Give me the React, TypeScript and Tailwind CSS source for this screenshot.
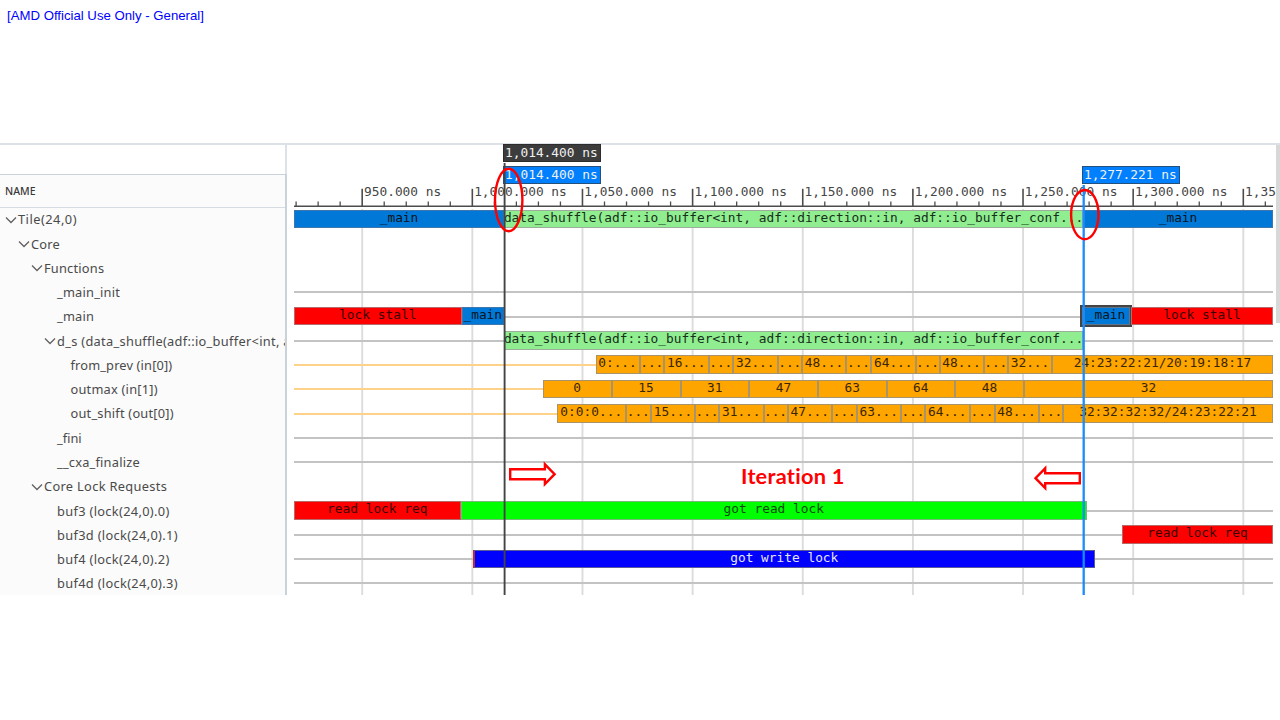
const MONO = 'font-["DejaVu_Sans_Mono",monospace] text-[12.83px] whitespace-pre';

const LEFT = 294;
const PITCH = 110.14;

type Segment = { from: number; to: number; label: string; tone: string };
type Row = {
  name: string;
  indent: number;
  tracking?: string;
  open?: boolean;
  line?: string;
  segments?: Segment[];
};

const BLUE = 'bg-[#0078d7] border-[#3d77ad] text-[#0a1420]';
const GREEN = 'bg-[#90ee90] border-[#9aae9a] text-[#16301a]';
const RED = 'bg-[#ff0000] border-[#b86a6a] text-[#3a0000]';
const ORANGE = 'bg-[#ffa500] border-[#a8936a] text-[#3a2600]';
const LIME = 'bg-[#00ff00] border-[#78b878] text-[#0a4a0a]';
const NAVY = 'bg-[#0000ff] border-[#5a5a9a] border-l-2 border-l-[#b03040] text-[#e6e6ff]';
const PICKED = 'bg-[#0078d7] border-[#5f7488] text-[#0a1420] outline-2 outline-[#444]';

const GREY_LINE = 'bg-[#c3c3c3]';
const AMBER_LINE = 'bg-[#ffd28a]';

const WIDE = 'tracking-[0.33px]';

const SHUFFLE = 'data_shuffle(adf::io_buffer<int, adf::direction::in, adf::io_buffer_conf...';

function chain(edges: number[], labels: string[]): Segment[] {
  return labels.map((label, i) => ({ from: edges[i], to: edges[i + 1], label, tone: ORANGE }));
}

const rows: Row[] = [
  {
    name: 'Tile(24,0)',
    indent: 5,
    tracking: 'tracking-[0.5px]',
    open: true,
    segments: [
      { from: 294, to: 504, label: '_main', tone: BLUE },
      { from: 504, to: 1083, label: SHUFFLE, tone: GREEN },
      { from: 1083, to: 1273, label: '_main', tone: BLUE },
    ],
  },
  { name: 'Core', indent: 18, open: true },
  { name: 'Functions', indent: 31, open: true },
  { name: '_main_init', indent: 57, line: GREY_LINE },
  {
    name: '_main',
    indent: 57,
    line: GREY_LINE,
    segments: [
      { from: 294, to: 461.5, label: 'lock stall', tone: RED },
      { from: 461.5, to: 504, label: '_main', tone: BLUE },
      { from: 1082, to: 1130, label: '_main', tone: PICKED },
      { from: 1131, to: 1273, label: 'lock stall', tone: RED },
    ],
  },
  {
    name: 'd_s (data_shuffle(adf::io_buffer<int, a',
    indent: 44,
    tracking: 'tracking-[0.31px]',
    open: true,
    line: GREY_LINE,
    segments: [{ from: 504, to: 1083, label: SHUFFLE, tone: GREEN }],
  },
  {
    name: 'from_prev (in[0])',
    indent: 70.5,
    tracking: 'tracking-[0.16px]',
    line: AMBER_LINE,
    segments: chain(
      [595.5, 639.5, 664, 708.5, 733, 777.5, 802, 846, 871, 915.5, 939.5, 983.5, 1008, 1052, 1273],
      ['0:...', '...', '16...', '...', '32...', '...', '48...', '...', '64...', '...', '48...', '...', '32...', '24:23:22:21/20:19:18:17'],
    ),
  },
  {
    name: 'outmax (in[1])',
    indent: 70.5,
    line: AMBER_LINE,
    segments: chain(
      [542.5, 611.5, 680.5, 749, 818, 886.5, 955, 1024, 1273],
      ['0', '15', '31', '47', '63', '64', '48', '32'],
    ),
  },
  {
    name: 'out_shift (out[0])',
    indent: 70.5,
    line: AMBER_LINE,
    segments: chain(
      [557, 625.5, 651, 695, 719, 763.5, 787.5, 832, 856.5, 901, 925, 969.5, 994.5, 1038.5, 1063, 1273],
      ['0:0:0...', '...', '15...', '...', '31...', '...', '47...', '...', '63...', '...', '64...', '...', '48...', '...', '32:32:32:32/24:23:22:21'],
    ),
  },
  { name: '_fini', indent: 57, tracking: 'tracking-normal', line: GREY_LINE },
  { name: '__cxa_finalize', indent: 57, line: GREY_LINE },
  { name: 'Core Lock Requests', indent: 31, tracking: WIDE, open: true },
  {
    name: 'buf3 (lock(24,0).0)',
    indent: 57,
    tracking: WIDE,
    line: GREY_LINE,
    segments: [
      { from: 294, to: 460.5, label: 'read lock req', tone: RED },
      { from: 460.5, to: 1087, label: 'got read lock', tone: LIME },
    ],
  },
  {
    name: 'buf3d (lock(24,0).1)',
    indent: 57,
    tracking: WIDE,
    line: GREY_LINE,
    segments: [{ from: 1122, to: 1273, label: 'read lock req', tone: RED }],
  },
  {
    name: 'buf4 (lock(24,0).2)',
    indent: 57,
    tracking: WIDE,
    line: GREY_LINE,
    segments: [{ from: 472.5, to: 1095, label: 'got write lock', tone: NAVY }],
  },
  { name: 'buf4d (lock(24,0).3)', indent: 57, tracking: WIDE, line: GREY_LINE },
];

const ticks = ['950.000 ns', '1,000.000 ns', '1,050.000 ns', '1,100.000 ns', '1,150.000 ns', '1,200.000 ns', '1,250.000 ns', '1,300.000 ns', '1,35'];

function Chevron() {
  return (
    <svg className="w-[13px] h-[8px] shrink-0" viewBox="0 0 13 8" fill="none" stroke="#606060" strokeWidth="1.3">
      <path d="M1 1.5 L6 6.5 L11 1.5" />
    </svg>
  );
}

function Tree() {
  return (
    <div className="w-[287px] shrink-0 flex flex-col">
      <div className="h-[30px] shrink-0 border-r-2 border-[#dde2e8]" />
      <div className="flex-1 flex flex-col bg-[#fbfbfb] border-t border-r-2 border-[#c9d2da] overflow-hidden">
        <div className="h-[32.8px] shrink-0 flex items-center pl-[5px] pt-px border-b border-[#d5dce4] font-['Noto_Sans',sans-serif] font-medium text-[10.5px] text-[#3a3a3a]">
          NAME
        </div>
        {rows.map((row) => (
          <div
            key={row.name}
            className={`h-[24.27px] shrink-0 flex items-center overflow-hidden whitespace-nowrap font-['Noto_Sans',sans-serif] text-[12.8px] text-[#4a4a4a] ${row.tracking ?? 'tracking-[0.22px]'}`}
            style={{ paddingLeft: row.indent }}
          >
            {row.open && <Chevron />}
            <span>{row.name}</span>
          </div>
        ))}
      </div>
    </div>
  );
}

function Ruler() {
  return (
    <div className="h-[63px] shrink-0 w-[982px] pt-[37px] flex flex-col overflow-hidden">
      <div className={`flex pl-[70px] h-[6px] shrink-0 ${MONO} leading-[22px] text-[#454545]`}>
        {ticks.map((t) => (
          <span key={t} className="w-[110.14px] shrink-0">{t}</span>
        ))}
      </div>
      <svg className="w-[979px] h-5 shrink-0" viewBox="0 0 979 20" fill="none" stroke="#4c4c4c">
        <path d="M0 19.2 H979" strokeWidth="1.5" />
        {Array.from({ length: 45 }, (_, i) => {
          const x = 2.1 + i * (PITCH / 5);
          const major = i % 5 === 3;
          return <path key={i} d={`M${x} ${major ? 1.8 : 14.5} V19`} strokeWidth={major ? 1.6 : 1.3} />;
        })}
      </svg>
    </div>
  );
}

function Track({ row }: { row: Row }) {
  const segments = row.segments ?? [];
  return (
    <div className="relative h-[24.27px] shrink-0 flex items-center">
      {row.line && <div className={`absolute inset-x-0 top-[11.5px] h-[2px] ${row.line}`} />}
      {segments.map((s, i) => (
        <div
          key={i}
          className={`relative h-[18.6px] shrink-0 border flex justify-center ${MONO} leading-[14px] ${s.tone}`}
          style={{ width: s.to - s.from, marginLeft: s.from - (i ? segments[i - 1].to : LEFT) }}
        >
          {s.label}
        </div>
      ))}
    </div>
  );
}

function Timeline() {
  return (
    <div className="relative ml-[7px] w-[979px] shrink-0 flex flex-col">
      <svg className="absolute left-0 top-[63px] w-[979px] h-[389px]" viewBox="0 0 979 389" stroke="#dcdcdc" strokeWidth="1.9">
        {ticks.map((t, i) => (
          <path key={t} d={`M${68.2 + i * PITCH} 2 V389`} />
        ))}
      </svg>
      <Ruler />
      {rows.map((row) => (
        <Track key={row.name} row={row} />
      ))}
    </div>
  );
}

function Markers() {
  const tag = `absolute h-[18px] border text-[#f0f0f0] pl-[1px] leading-[16px] ${MONO}`;
  return (
    <>
      <div className={`${tag} left-[503px] top-[144px] w-[98px] bg-[#3c3c3c] border-[#2c2c2c]`}>1,014.400 ns</div>
      <div className={`${tag} left-[503px] top-[166px] w-[98px] bg-[#0080ff] border-[#24507c]`}>1,014.400 ns</div>
      <div className={`${tag} left-[1082px] top-[166px] w-[98px] bg-[#0080ff] border-[#24507c]`}>1,277.221 ns</div>
      <svg className="absolute left-0 top-0 w-[1280px] h-[720px]" viewBox="0 0 1280 720" fill="none" stroke="#ff0000" strokeWidth="2.4">
        <path d="M504.6 163 V595" stroke="#444" strokeWidth="1.9" />
        <path d="M1083.7 185 V595" stroke="#1a8cff" strokeWidth="2.3" />
        <ellipse cx="508.7" cy="200" rx="13.7" ry="31.2" />
        <ellipse cx="1084.8" cy="214.6" rx="13.7" ry="24.6" />
        <path fill="#fff" d="M510.2 469.2 H544.9 V464.3 L554.6 474.2 L544.9 484.1 V479.2 H510.2 Z" />
        <path fill="#fff" d="M1079.8 473.2 H1045.2 V468.3 L1035.5 478.2 L1045.2 488.1 V483.2 H1079.8 Z" />
      </svg>
      <div className="absolute left-[741px] top-[462px] font-['Lato',sans-serif] font-bold text-[21.8px] leading-[28px] tracking-[0.22px] text-[#ff0000] whitespace-nowrap">
        Iteration 1
      </div>
    </>
  );
}

export default function App() {
  return (
    <div className="relative w-[1280px] h-[720px] overflow-hidden bg-white">
      <header className="h-[143px] pt-[7px] pl-[7px] font-['Liberation_Sans',sans-serif] text-[13.2px] leading-[17px] text-[#0000ff]">
        [AMD Official Use Only - General]
      </header>
      <main className="h-[452px] flex border-t-2 border-[#dde2e8] overflow-hidden">
        <div className="flex -mt-px h-[452px]">
          <Tree />
          <Timeline />
        </div>
        <div className="ml-auto w-1 h-[178px] bg-[#d8d8d8]" />
      </main>
      <Markers />
    </div>
  );
}
